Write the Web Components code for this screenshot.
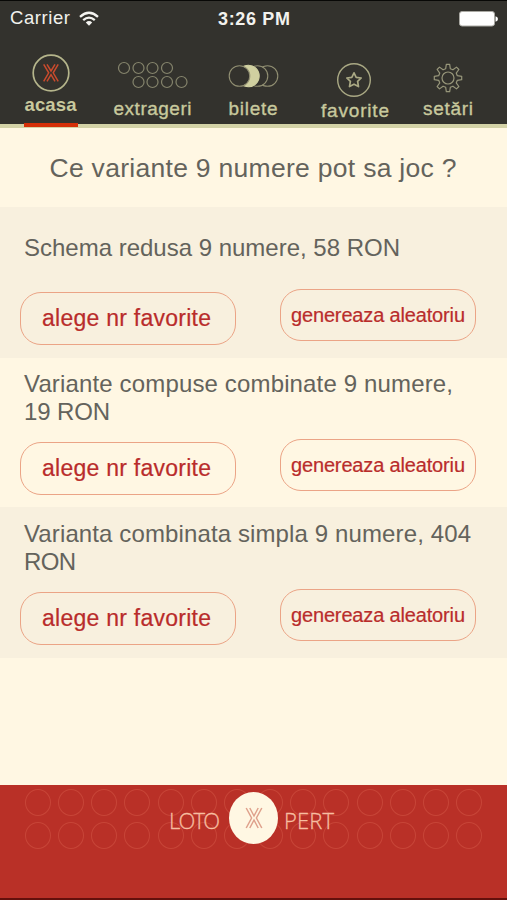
<!DOCTYPE html>
<html lang="ro">
<head>
<meta charset="utf-8">
<title>Loto Xpert</title>
<style>
html,body{margin:0;padding:0}
body{width:507px;height:900px;overflow:hidden;background:#fff7e3;font-family:"Liberation Sans",Arial,sans-serif}
</style>
</head>
<body>
<loto-app></loto-app>
<script>
const define = (name, html, after) => {
  const tpl = document.createElement('template');
  tpl.innerHTML = html;
  customElements.define(name, class extends HTMLElement {
    connectedCallback() {
      if (this.shadowRoot) return;
      this.attachShadow({mode: 'open'}).append(tpl.content.cloneNode(true));
      if (after) after(this, this.shadowRoot);
    }
  });
};

// One line of text, tracked so that it takes up the width in its "w" attribute.
define('fit-text', `<style>
  :host{display:block;white-space:nowrap;line-height:1}
  span{display:inline-block;white-space:pre}
</style><span><slot></slot></span>`, (el, root) => {
  const s = root.querySelector('span');
  const n = el.textContent.length;
  const w = +el.getAttribute('w');
  el.style.width = w + 'px';
  s.style.letterSpacing = ((w - s.getBoundingClientRect().width) / (n - 1)) + 'px';
});

define('status-bar', `<style>
  :host{display:grid;grid-template-columns:1fr auto 1fr;align-items:center;height:34px;box-sizing:border-box;padding:1px 9px 0 10px;color:#f2f2ee;font-size:18.5px}
  .left{display:flex;align-items:center;gap:9px}
  .time{font-weight:bold;font-size:18px}
  svg{display:block}
  .bat{justify-self:end}
</style>
<div class="left"><fit-text w="60">Carrier</fit-text>
<svg width="20" height="16" viewBox="0 0 20 16" fill="none" stroke="#f4f4f0" stroke-width="2.3"><path d="M1 5.8Q10-2.2 19 5.8M4.2 9.2Q10 4.1 15.8 9.2"/><path d="M6.8 11.4Q10 8.8 13.2 11.4L10 14.8Z" fill="#f4f4f0" stroke="none"/></svg></div>
<fit-text class="time" w="72">3:26 PM</fit-text>
<svg class="bat" width="39" height="16" viewBox="0 0 39 16"><rect x=".5" y=".5" width="35" height="14.5" rx="2.5" fill="#fff" stroke="#aaa9a3"/><path d="M36.5 5.3Q39 6 39 8T36.5 10.7Z" fill="#fff"/></svg>`);

define('x-mark', `<style>:host{display:block}svg{display:block;width:100%;height:100%}</style>
<svg viewBox="0 0 18 22" fill="none" stroke="currentColor" stroke-width="1.5"><path d="M1.2 1L6.6 11L1.2 21M16.8 1L11.4 11L16.8 21M4.8 1L9 9L13.2 1M4.8 21L9 13L13.2 21"/></svg>`);

define('nav-tab', `<style>
  :host{display:grid;grid-template-rows:60px auto;justify-items:center;align-items:end;align-content:start;color:#c8c99d;font-size:19px;box-sizing:border-box}
</style><slot name="icon"></slot><slot></slot>`);

define('tab-bar', `<style>
  :host{display:grid;grid-template-columns:101px 103px 98px 106px 80px;height:93px;box-sizing:border-box;border-bottom:4px solid #d3d2a6}
  svg{display:block}
  .active{border-bottom:4px solid #d42f08}
  nav-tab{margin-bottom:-3px}
  .home{grid-template-rows:61px auto;width:54px;justify-self:center}
  .home svg{margin-bottom:4px}
  .home x-mark{width:17px;height:19px}
  .home fit-text{font-weight:bold;font-size:18.5px}
  nav-tab{grid-template-rows:64px auto}
  .fav{grid-template-rows:66px auto}
  .ext svg{margin-bottom:10px}.bil svg{margin-bottom:11px}.fav svg{margin-bottom:3px}
  .txt{-webkit-text-stroke:.35px #c8c99d}
</style>
<nav-tab class="home active"><svg slot="icon" width="38" height="38" viewBox="0 0 38 38" fill="none"><circle cx="19" cy="19" r="17.8" stroke="#b5b58b" stroke-width="1.7"/><path transform="translate(11.2 9.8)" stroke="#ca4b2d" stroke-width="1.5" d="M.5 .5L5.5 9L.5 17.5M15 .5L10 9L15 17.5M3.8 .5L7.8 7.2L11.8 .5M3.8 17.5L7.8 10.8L11.8 17.5"/></svg><fit-text w="52">acasa</fit-text></nav-tab>
<nav-tab class="ext"><svg slot="icon" width="72" height="28" viewBox="0 0 72 28" fill="none" stroke="#85846c" stroke-width="1.2"><circle cx="7" cy="7" r="5.5"/><circle cx="21.5" cy="7" r="5.5"/><circle cx="35.5" cy="7" r="5.5"/><circle cx="50" cy="7" r="5.5"/><circle cx="21.5" cy="21" r="5.5"/><circle cx="35.5" cy="21" r="5.5"/><circle cx="50" cy="21" r="5.5"/><circle cx="64.5" cy="21" r="5.5"/></svg><fit-text class="txt" w="78">extrageri</fit-text></nav-tab>
<nav-tab class="bil"><svg slot="icon" width="52" height="24" viewBox="0 0 52 24" fill="none" stroke="#918f72" stroke-width="1.1"><circle cx="40.5" cy="12" r="10.3"/><circle cx="30.5" cy="12" r="10.3" fill="#33322d"/><circle cx="21.5" cy="12" r="10.7" fill="#d0d0a0" stroke="#d0d0a0"/><circle cx="12.5" cy="12" r="10.3" fill="#33322d"/></svg><fit-text class="txt" w="49">bilete</fit-text></nav-tab>
<nav-tab class="fav"><svg slot="icon" style="margin-right:3px" width="36" height="36" viewBox="0 0 36 36" fill="none" stroke="#aaa984"><circle cx="18" cy="18" r="16.3" stroke-width="1.4"/><path stroke-width="1.7" stroke-linejoin="round" d="M18 10.8L20.2 15.3L25.2 16L21.6 19.4L22.5 24.6L18 22.2L13.5 24.6L14.4 19.4L10.8 16L15.8 15.3Z"/></svg><fit-text class="txt" w="68">favorite</fit-text></nav-tab>
<nav-tab><svg slot="icon" style="margin-bottom:6px" width="30" height="30" viewBox="0 0 30 30" fill="none" stroke="#97967a" stroke-width="1.2" stroke-linejoin="round"><circle cx="15" cy="15" r="6"/><path id="gear"/></svg><fit-text class="txt" w="50">setări</fit-text></nav-tab>`, (el, root) => {
  // Outline of the cog: eight teeth at equal angles.
  let d = '';
  for (let i = 0; i < 8; i++) {
    for (const [off, r] of [[-14, 9.6], [-7, 13.8], [7, 13.8], [14, 9.6]]) {
      const a = (i * 45 - 90 + off) * Math.PI / 180;
      d += (d ? 'L' : 'M') + (15 + r * Math.cos(a)).toFixed(2) + ' ' + (15 + r * Math.sin(a)).toFixed(2);
    }
  }
  root.querySelector('#gear').setAttribute('d', d + 'Z');
});

define('pill-button', `<style>
  :host{display:flex;align-items:center;justify-content:center;box-sizing:border-box;border:1.4px solid #eba486;border-radius:21px;width:216px;height:53px;padding-right:3px;color:#b92c2b;font-size:23px;-webkit-text-stroke:.2px #b92c2b}
  :host([small]){width:196px;height:52px;font-size:20px;padding-right:0}
</style><slot></slot>`);

define('variant-row', `<style>
  :host{display:flex;flex-direction:column;justify-content:space-between;box-sizing:border-box;height:150px;padding:12px 31px 13px 20px;background:#fff7e3;color:#64635c;font-size:24px}
  :host([shade]){background:#f8f0de}
  .label{display:grid;grid-auto-rows:28px;align-items:center;padding-left:4px;height:56px;align-content:center}
  .btns{display:flex;justify-content:space-between;align-items:flex-start}
  .btns pill-button:first-child{margin-top:3px}
</style><div class="label"><slot></slot></div>
<div class="btns"><pill-button><fit-text w="169">alege nr favorite</fit-text></pill-button><pill-button small><fit-text w="174">genereaza aleatoriu</fit-text></pill-button></div>`);

define('brand-footer', `<style>
  :host{display:block;height:115px;box-sizing:border-box;background:#b93027;border-bottom:2px solid #64100c;position:relative}
  .dots{display:grid;grid-template-columns:repeat(14,26px);grid-auto-rows:27px;gap:6px 7.2px;justify-content:center;padding-top:4px}
  .dots i{border:1px solid #c74538;border-radius:50%;box-sizing:border-box}
  .brand{position:absolute;left:169px;top:7px;display:flex;align-items:center;color:#f6bda0;font-size:22px;font-family:"Open Sans","Noto Sans",sans-serif;font-weight:300;-webkit-text-stroke:.3px #f6bda0}
  .brand fit-text{padding-top:3px}
  .badge{width:49px;height:52px;border-radius:50%;background:#fff7e3;display:grid;place-items:center;margin:0 6px 0 9px;color:#dfa18c}
  x-mark{width:18px;height:22px}
</style><div class="dots"></div>
<div class="brand"><fit-text w="51">LOTO</fit-text><div class="badge"><x-mark></x-mark></div><fit-text w="50">PERT</fit-text></div>`, (el, root) => {
  root.querySelector('.dots').innerHTML = '<i></i>'.repeat(28);
});

define('loto-app', `<style>
  :host{display:flex;flex-direction:column;width:507px;height:900px;background:#fff7e3}
  header{background:#33322d;height:128px;box-sizing:border-box;border-top:1px solid #080806}
  .title{height:79px;display:flex;align-items:center;justify-content:center;color:#64635c;font-size:26.5px;box-sizing:border-box;padding:1px 1px 0 0}
  .first{height:151px;padding-top:13px}
  .mid{height:149px;padding-bottom:12px}
  .last{height:151px;padding-top:13px}
  brand-footer{margin-top:auto}
</style>
<header><status-bar></status-bar><tab-bar></tab-bar></header>
<div class="title"><fit-text w="407">Ce variante 9 numere pot sa joc ?</fit-text></div>
<variant-row class="first" shade><fit-text w="376">Schema redusa 9 numere, 58 RON</fit-text></variant-row>
<variant-row class="mid"><fit-text w="429">Variante compuse combinate 9 numere,</fit-text><fit-text w="86">19 RON</fit-text></variant-row>
<variant-row class="last" shade><fit-text w="447">Varianta combinata simpla 9 numere, 404</fit-text><fit-text w="52">RON</fit-text></variant-row>
<brand-footer></brand-footer>`);
</script>
</body>
</html>
